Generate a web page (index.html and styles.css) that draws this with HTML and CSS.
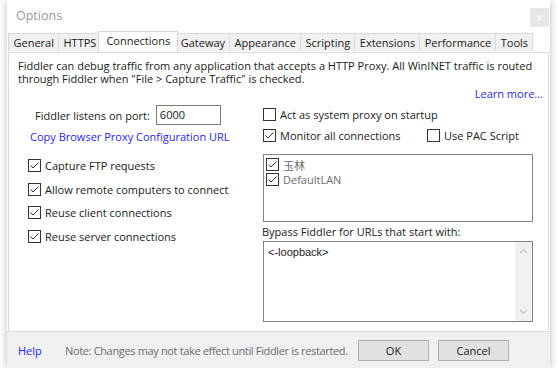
FILE: index.html
```html
<!DOCTYPE html>
<html>
<head>
  <title>Options</title>
  <link rel="stylesheet" href="styles.css">
</head>
<body>
    <div class="window">
        <div class="titlebar">
            <span class="title">Options</span>
            <span class="close">x</span>
        </div>
        <div class="tabs">
            <span class="tab">General</span>
            <span class="tab">HTTPS</span>
            <span class="tab selected">Connections</span>
            <span class="tab">Gateway</span>
            <span class="tab">Appearance</span>
            <span class="tab">Scripting</span>
            <span class="tab">Extensions</span>
            <span class="tab">Performance</span>
            <span class="tab">Tools</span>
        </div>
        <div class="panel">
            <p class="intro">Fiddler can debug traffic from any application that accepts a HTTP Proxy. All WinINET traffic is routed through Fiddler when "File &gt; Capture Traffic" is checked.</p>
            <div class="learn"><a class="link">Learn more...</a></div>
            <div class="columns">
                <div class="left">
                    <div class="port-row">
                        <label>Fiddler listens on port:</label>
                        <span class="input">6000</span>
                    </div>
                    <a class="link copy-link">Copy Browser Proxy Configuration URL</a>
                    <div class="checks">
                        <div class="check"><span class="box on"></span>Capture FTP requests</div>
                        <div class="check"><span class="box on"></span>Allow remote computers to connect</div>
                        <div class="check"><span class="box on"></span>Reuse client connections</div>
                        <div class="check"><span class="box on"></span>Reuse server connections</div>
                    </div>
                </div>
                <div class="right">
                    <div class="check top-row"><span class="box"></span>Act as system proxy on startup</div>
                    <div class="check-pair">
                        <div class="check"><span class="box on"></span>Monitor all connections</div>
                        <div class="check"><span class="box"></span>Use PAC Script</div>
                    </div>
                    <div class="listbox">
                        <div class="item"><span class="box on"></span>玉林</div>
                        <div class="item"><span class="box on"></span>DefaultLAN</div>
                    </div>
                    <div class="bypass-label">Bypass Fiddler for URLs that start with:</div>
                    <div class="textbox">
                        <span class="text">&lt;-loopback&gt;</span>
                        <div class="scrollbar">
                            <svg width="9" height="6" viewBox="0 0 9 6"><path d="M1 5 L4.5 1.5 L8 5" fill="none" stroke="#c2c2c2" stroke-width="1.2"/></svg>
                            <svg width="9" height="6" viewBox="0 0 9 6"><path d="M1 1 L4.5 4.5 L8 1" fill="none" stroke="#c2c2c2" stroke-width="1.2"/></svg>
                        </div>
                    </div>
                </div>
            </div>
        </div>
        <footer>
            <a class="link help">Help</a>
            <span class="note">Note: Changes may not take effect until Fiddler is restarted.</span>
            <button class="ok">OK</button>
            <button>Cancel</button>
        </footer>
    </div>
</body>
</html>
```

FILE: styles.css
```css
/* Page */
body {
    margin: 0;
    background-color: #ffffff;
    font-family: 'Open Sans', 'Noto Sans CJK SC', sans-serif;
    font-size: 11px;
    color: #1a1a1a;
}

/* Dialog window */
.window {
    margin-left: 7px;
    width: 543px;
    height: 368px;
    background-color: #ffffff;
    box-shadow: 0 1px 8px rgba(0, 0, 0, 0.28);
    display: flex;
    flex-direction: column;
}

.titlebar {
    height: 31px;
    display: flex;
    align-items: flex-start;
    justify-content: space-between;
}

.title {
    margin: 7px 0 0 9px;
    font-size: 12.5px;
    color: #9a9a9a;
}

.close {
    margin: 8px 1px 0 0;
    width: 19px;
    height: 19px;
    line-height: 17px;
    text-align: center;
    background-color: #e6e6e6;
    color: #ffffff;
    font-size: 11px;
}

/* Tabs */
.tabs {
    display: flex;
    align-items: flex-end;
    height: 21px;
    margin-left: 1px;
    position: relative;
    z-index: 1;
}

.tab {
    height: 18px;
    line-height: 17px;
    padding: 0 4px 0 4.5px;
    margin-bottom: 1px;
    margin-right: -1px;
    background-color: #f0f0f0;
    border: 1px solid #d9d9d9;
    border-bottom: none;
    box-sizing: border-box;
}

.tab.selected {
    height: 21px;
    margin: 0 -3px 0 -2px;
    padding: 0 7px;
    line-height: 18px;
    background-color: #ffffff;
    position: relative;
    z-index: 2;
}

.panel {
    margin: 0 1px 0 1px;
    height: 279px;
    box-sizing: border-box;
    border: 1px solid #d9d9d9;
    border-bottom: none;
    padding-top: 6px;
}

.intro {
    margin: 0 0 0 9px;
    line-height: 13px;
    width: 530px;
}

.learn {
    margin-top: 2px;
    height: 13px;
    line-height: 13px;
    text-align: right;
    padding-right: 5px;
}

.link {
    color: #1f1fff;
}

/* Two columns */
.columns {
    margin-top: 5px;
    display: grid;
    grid-template-columns: 254px 270px;
}

.left {
    display: flex;
    flex-direction: column;
}

.port-row {
    height: 20px;
    display: flex;
    align-items: center;
    padding-left: 26px;
    gap: 6px;
}

.input {
    width: 65px;
    height: 20px;
    box-sizing: border-box;
    border: 1px solid #7a7a7a;
    padding-left: 3px;
    line-height: 18px;
}

.copy-link {
    margin-top: 4px;
    line-height: 16px;
    padding-left: 21px;
}

.checks {
    margin-top: 9px;
    padding-left: 19px;
}

.check {
    display: flex;
    align-items: center;
    height: 23.5px;
}

.box {
    width: 13px;
    height: 13px;
    box-sizing: border-box;
    border: 1px solid #333333;
    background-color: #ffffff;
    margin-right: 4px;
    flex-shrink: 0;
}

.box.on {
    background-image: url("data:image/svg+xml,%3Csvg xmlns='http://www.w3.org/2000/svg' width='11' height='11'%3E%3Cpath d='M1.5 5.5 L4 8 L9.5 2.5' fill='none' stroke='%23333333' stroke-width='1'/%3E%3C/svg%3E");
}

.top-row {
    height: 19px;
}

.check-pair {
    display: grid;
    grid-template-columns: 164px auto;
}

.check-pair .check {
    height: 23px;
}

.listbox {
    margin-top: 7px;
    width: 270px;
    height: 68px;
    box-sizing: border-box;
    border: 1px solid #828790;
    padding: 2px 0 0 2px;
    color: #6d6d6d;
}

.item {
    display: flex;
    align-items: center;
    height: 15px;
}

.bypass-label {
    margin: 2px 0 0 -1px;
    line-height: 16px;
}

.textbox {
    margin-top: 1px;
    width: 270px;
    height: 81px;
    box-sizing: border-box;
    border: 1px solid #828282;
    display: flex;
    justify-content: space-between;
}

.textbox .text {
    padding: 3px 0 0 4px;
    line-height: 14px;
    font-family: 'Liberation Sans', sans-serif;
}

.scrollbar {
    width: 17px;
    background-color: #f0f0f0;
    display: flex;
    flex-direction: column;
    align-items: center;
    justify-content: space-between;
    padding: 6px 0;
    box-sizing: border-box;
}

/* Footer */
footer {
    flex: 1;
    background-color: #f0f0f0;
    border-top: 1px solid #dcdcdc;
    display: flex;
    align-items: center;
    padding: 0 41px 0 11px;
}

.help {
    width: 47px;
}

.note {
    color: #6d6d6d;
    letter-spacing: -0.35px;
}

button {
    width: 71px;
    height: 21px;
    font-family: inherit;
    font-size: 11px;
    background-color: #e1e1e1;
    border: 1px solid #adadad;
    color: #1a1a1a;
    padding: 0;
}

button.ok {
    margin-left: auto;
    margin-right: 9px;
}
```
